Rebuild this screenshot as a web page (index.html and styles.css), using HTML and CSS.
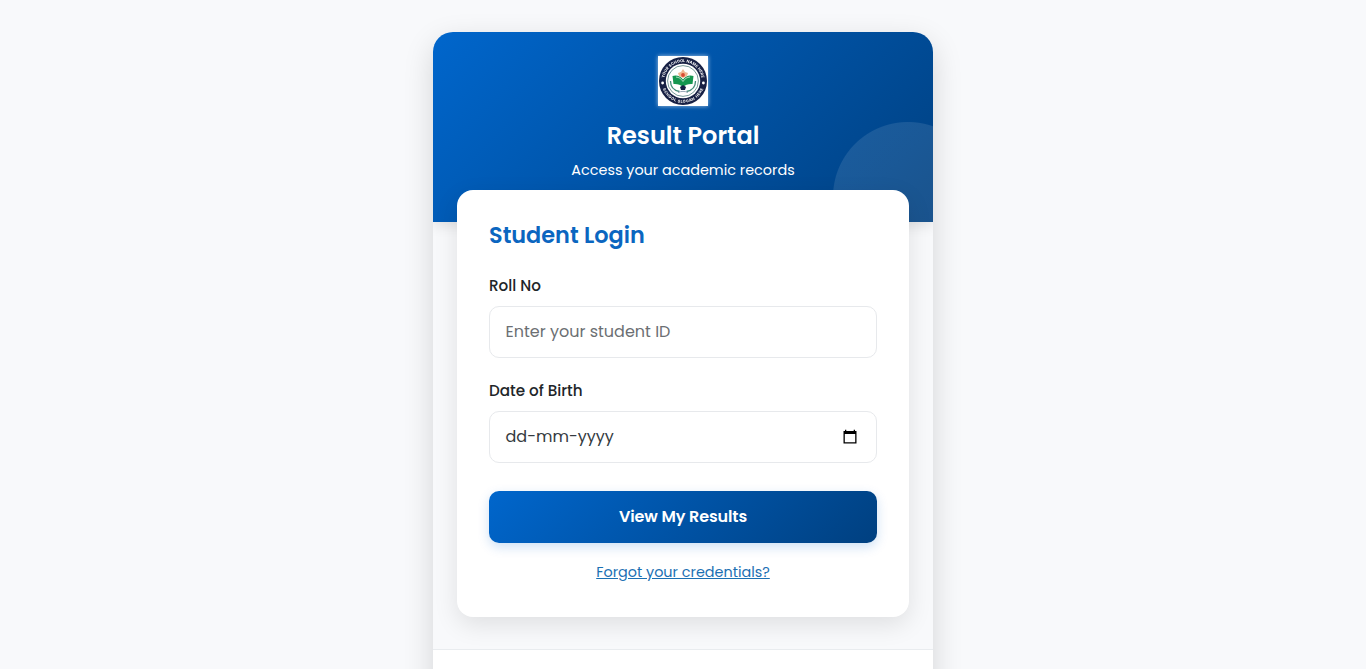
FILE: index.html
```html
<!DOCTYPE html>
<html lang="en">
<head>
<meta charset="utf-8">
<title>Result Portal</title>
<link rel="stylesheet" href="styles.css">
</head>
<body>
<div class="portal">
  <header class="header">
    <svg class="logo" viewBox="0 0 50 50" role="img" aria-label="School crest">
      <defs>
        <path id="arc-top" d="M6 25a19 19 0 0 1 38 0"/>
        <path id="arc-bottom" d="M3.2 25a21.8 21.8 0 0 0 43.6 0"/>
      </defs>
      <rect width="50" height="50" fill="#fff"/>
      <circle cx="25" cy="25" r="24" fill="#172044"/>
      <circle cx="25" cy="25" r="17.200" fill="#fff"/>
      <circle cx="25" cy="25" r="15.400" fill="none" stroke="#3d6f70" stroke-width=".7"/>
      <text class="crest-text"><textPath href="#arc-top" startOffset="50%" text-anchor="middle" textLength="53">YOUR SCHOOL NAME HERE</textPath></text>
      <text class="crest-text"><textPath href="#arc-bottom" startOffset="50%" text-anchor="middle" textLength="52">SCHOOL SLOGAN HERE</textPath></text>
      <circle cx="4.600" cy="27" r="1.400" fill="#fff"/>
      <circle cx="45.400" cy="27" r="1.400" fill="#fff"/>
      <path d="M14.500 20l3-.5c3 0 5.500 1.500 7.500 4 2-2.500 4.500-4 7.500-4l3 .5-1 8c-4-.3-7 .6-9.500 3-2.500-2.400-5.500-3.300-9.500-3z" fill="#15964f"/>
      <path d="M18 21c3 .3 5 1.500 7 4.500 2-3 4-4.200 7-4.500" fill="none" stroke="#e9f5ec" stroke-width=".7"/>
      <path d="M21 20l-1-3 3-1 2-3 2 3 3 1-1 3-4 2z" fill="#f0b792"/>
      <circle cx="25" cy="19" r="1.900" fill="#d84b32"/>
      <path d="M12.500 25c0 6 3.500 9.500 9 10.500M37.500 25c0 6-3.500 9.500-9 10.500" fill="none" stroke="#428b78" stroke-width="1.300"/>
      <path d="M22 31l3-2 3 2-1 3h-4z" fill="#172044"/>
      <path d="M20 36.500c3-1.500 7-1.500 10 0" fill="none" stroke="#9aa8b8"/>
    </svg>
    <h1 class="title">Result Portal</h1>
    <p class="subtitle">Access your academic records</p>
  </header>
  <main class="card">
    <h2 class="card-title">Student Login</h2>
    <label class="label label-roll" for="roll">Roll No</label>
    <input class="field" id="roll" type="text" placeholder="Enter your student ID">
    <div class="label label-dob">Date of Birth</div>
    <div class="field date">
      <span class="date-text">dd-mm-yyyy</span>
      <svg class="calendar" viewBox="0 0 16 16"><path fill-rule="evenodd" d="M3 .7h1.300V2h7.400V.7H13V2h1.500v12.500h-13V2H3zM2.800 5v8.200h10.400V5z"/></svg>
    </div>
    <button class="submit" type="button">View My Results</button>
    <a class="forgot" href="#">Forgot your credentials?</a>
  </main>
  <footer class="footer"></footer>
</div>
</body>
</html>
```
FILE: styles.css
```css
* { box-sizing: border-box; }
html { overflow: hidden; }
body {
  margin: 0;
  padding-top: 32px;
  height: 669px;
  overflow: hidden;
  background: #f8f9fb;
  color: #212529;
  font-family: Poppins, Inter, sans-serif;
}
.portal {
  width: 500px;
  height: 760px;
  margin: 0 auto;
  overflow: hidden;
  border-radius: 20px;
  background: #f8f9fb;
  box-shadow: 0 10px 30px rgba(0, 0, 0, .15);
}
.header {
  position: relative;
  display: flex;
  flex-direction: column;
  align-items: center;
  height: 190px;
  padding-top: 24px;
  background: linear-gradient(135deg, #0066cc, #004080);
  box-shadow: 0 4px 12px rgba(0, 0, 0, .1);
  color: #fff;
  clip-path: inset(0 0 -20px 0);
}
.header::after {
  content: "";
  position: absolute;
  inset: 0;
  background: radial-gradient(circle at 475px 165px, rgba(255, 255, 255, .1) 74.500px, transparent 75.500px);
}
.logo { width: 50px; height: 50px; filter: drop-shadow(0 0 2px rgba(255, 255, 255, .65)); }
.crest-text { fill: #fff; font: 700 3.800px Inter, sans-serif; }
.title {
  margin: 12px 0 0;
  font-size: 24px;
  line-height: 36px;
  font-weight: 600;
}
.subtitle { margin: 4px 0 0; font-size: 14.400px; line-height: 24px; }
.card {
  position: relative;
  display: flex;
  flex-direction: column;
  height: 427px;
  margin: -32px 24px 32px;
  padding: 28px 32px 0;
  border-radius: 16px;
  background: #fff;
  box-shadow: 0 8px 24px rgba(0, 0, 0, .1);
}
.card-title { margin: 0; color: #0b66c0; font-size: 22.400px; line-height: 34px; font-weight: 600; }
.label { font-size: 15.200px; line-height: 24px; font-weight: 500; white-space: nowrap; }
.label-roll { margin: 22px 0 8px; }
.label-dob { margin: 21px 0 8px; }
.field {
  width: 388px;
  height: 52px;
  padding: 0 16px 2px 15.500px;
  border: 1px solid #e7e9ec;
  border-radius: 10px;
  outline: 0;
  background: #fff;
  color: #343a40;
  font: 400 16px/24px Poppins, Inter, sans-serif;
}
.field::placeholder { color: #6c6f73; opacity: 1; }
.date { display: flex; align-items: center; justify-content: space-between; padding-bottom: 0; }
.calendar { width: 16px; height: 16px; margin-right: 2px; fill: #000; }
.submit {
  height: 52px;
  margin: 28px 0 18px;
  border: 0;
  border-radius: 10px;
  background: linear-gradient(135deg, #0066cc, #004080);
  box-shadow: 0 4px 12px rgba(0, 102, 204, .2);
  color: #fff;
  font: 600 16px/24px Poppins, Inter, sans-serif;
  letter-spacing: -.1px;
}
.forgot { align-self: center; color: #1b70b3; font-size: 14.400px; line-height: 22px; }
.footer { height: 143px; border-top: 1px solid #e9ecef; background: #fff; }
```
